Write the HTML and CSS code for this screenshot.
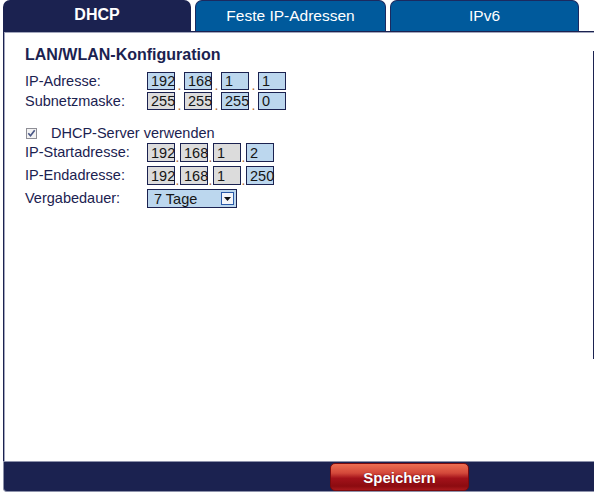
FILE: index.html
```html
<!DOCTYPE html>
<html lang="de">
<head>
  <meta charset="UTF-8" />
  <title>DHCP</title>
  <link rel="stylesheet" href="styles.css">
</head>
<body>
  <div class="tabs">
    <div class="tab tab-active">DHCP</div>
    <div class="tab tab-fixed">Feste IP-Adressen</div>
    <div class="tab tab-v6">IPv6</div>
  </div>

  <div class="panel">
    <h2>LAN/WLAN-Konfiguration</h2>

    <div class="row">
      <span class="label">IP-Adresse:</span>
      <div class="ip">
        <span class="box">192</span><span class="dot">.</span>
        <span class="box">168</span><span class="dot">.</span>
        <span class="box">1</span><span class="dot">.</span>
        <span class="box">1</span>
      </div>
    </div>
    <div class="row">
      <span class="label">Subnetzmaske:</span>
      <div class="ip">
        <span class="box grey">255</span><span class="dot">.</span>
        <span class="box grey">255</span><span class="dot">.</span>
        <span class="box">255</span><span class="dot">.</span>
        <span class="box">0</span>
      </div>
    </div>

    <div class="check-row">
      <span class="check">
        <svg width="9" height="9" viewBox="0 0 9 9"><path d="M1.3 4.3 L3.5 6.7 L7.7 1.3" fill="none" stroke="#4a5786" stroke-width="1.7"/></svg>
      </span>
      DHCP-Server verwenden
    </div>

    <div class="row row-tall">
      <span class="label">IP-Startadresse:</span>
      <div class="ip ip-tight">
        <span class="box grey">192</span><span class="dot">.</span>
        <span class="box grey">168</span><span class="dot">.</span>
        <span class="box grey">1</span><span class="dot">.</span>
        <span class="box">2</span>
      </div>
    </div>
    <div class="row row-tall">
      <span class="label">IP-Endadresse:</span>
      <div class="ip ip-tight">
        <span class="box grey">192</span><span class="dot">.</span>
        <span class="box grey">168</span><span class="dot">.</span>
        <span class="box grey">1</span><span class="dot">.</span>
        <span class="box">250</span>
      </div>
    </div>
    <div class="row row-tall">
      <span class="label">Vergabedauer:</span>
      <div class="select">
        <span>7 Tage</span>
        <span class="select-btn">
          <svg width="7" height="4" viewBox="0 0 7 4"><path d="M0 0 H7 L3.5 4 Z" fill="#111"/></svg>
        </span>
      </div>
    </div>
  </div>

  <div class="footer">
    <button class="btn-save">Speichern</button>
  </div>
</body>
</html>
```

FILE: styles.css
```css
body {
  margin: 0;
  height: 492px;
  display: flex;
  flex-direction: column;
  font-family: 'Liberation Sans', Arial, sans-serif;
  color: #1b2250;
  background: #fff;
  overflow: hidden;
}

/* tabs */
.tabs {
  display: flex;
  gap: 4px;
  margin-left: 3px;
  height: 31px;
  border-bottom: 1px solid #1b2250;
  flex-shrink: 0;
}

.tab {
  height: 31px;
  line-height: 29px;
  text-align: center;
  color: #fff;
  font-size: 15.5px;
  border-radius: 7px 7px 0 0;
  box-sizing: border-box;
}

.tab-active {
  width: 188px;
  background: #1b2250;
  font-size: 16px;
  font-weight: bold;
}

.tab-fixed,
.tab-v6 {
  background: #005a9c;
  border: 1px solid #1b2a60;
  border-bottom: none;
}

.tab-fixed {
  width: 191px;
}

.tab-v6 {
  width: 189px;
}

/* content */
.panel {
  position: relative;
  flex: 1;
  margin-left: 3px;
  padding: 14px 0 0 21px;
  border-left: 1px solid #1b2250;
  box-shadow: inset 1px 1px 0 #a3a7bd;
  font-size: 14.5px;
}

.panel::after {
  content: '';
  position: absolute;
  right: 0;
  top: 19px;
  width: 1px;
  height: 308px;
  background: #1b2250;
}

h2 {
  margin: 0 0 7px;
  font-size: 16px;
  line-height: 18px;
  font-weight: bold;
}

.row {
  display: flex;
  align-items: center;
  height: 20px;
}

.row-tall {
  height: 23px;
  align-items: flex-start;
  padding-top: 1px;
  box-sizing: border-box;
}

.label {
  width: 122px;
  line-height: 20px;
  flex-shrink: 0;
}

.row-tall .label {
  line-height: 19px;
}

.ip {
  display: flex;
  align-items: flex-end;
}

.box {
  flex-shrink: 0;
  width: 28px;
  height: 18px;
  line-height: 17px;
  padding-left: 3px;
  box-sizing: border-box;
  border: 1px solid #1b2250;
  background: #bcd7ee;
  color: #151515;
}

.box.grey {
  background: #dcdcdc;
}

.ip-tight .box {
  height: 19px;
  line-height: 18px;
}

.dot {
  width: 9px;
  text-align: center;
  color: #b06a30;
  font-size: 14px;
  line-height: 10px;
}

.ip-tight .dot {
  width: 5px;
}

.check-row {
  display: flex;
  align-items: center;
  height: 18px;
  margin-top: 13px;
  line-height: 18px;
}

.check {
  display: flex;
  align-items: center;
  justify-content: center;
  width: 9px;
  height: 9px;
  margin: 0 14px 0 1px;
  border: 1px solid #8e8e96;
  background: #f3f3f3;
}

.select {
  display: flex;
  align-items: center;
  justify-content: space-between;
  width: 90px;
  height: 19px;
  padding: 0 2px 0 6px;
  box-sizing: border-box;
  border: 1px solid #1b2250;
  background: #bcd7ee;
  color: #151515;
  line-height: 18px;
}

.select-btn {
  display: flex;
  align-items: center;
  justify-content: center;
  width: 11px;
  height: 11px;
  border: 1px solid #2a5aa8;
  background: #f4f6fa;
}

/* footer */
.footer {
  flex-shrink: 0;
  height: 31px;
  margin-left: 3px;
  padding: 1px 0 0 326px;
  box-sizing: border-box;
  background: #1b2250;
  border-top: 1px solid #8d92ab;
  border-bottom: 1px solid #8d92ab;
  border-left: 1px solid #8d92ab;
  border-bottom-left-radius: 4px;
}

.btn-save {
  width: 139px;
  height: 28px;
  padding: 0;
  border: 1px solid #7a0a0e;
  border-radius: 5px;
  background: linear-gradient(#ee6e52 0%, #d3483a 35%, #a3121a 55%, #8c0b10 85%, #a8181c 100%);
  color: #fff;
  font-family: 'Liberation Sans', Arial, sans-serif;
  font-size: 15px;
  font-weight: bold;
  text-shadow: 0 0 1px #5a0000;
  cursor: pointer;
}
```
